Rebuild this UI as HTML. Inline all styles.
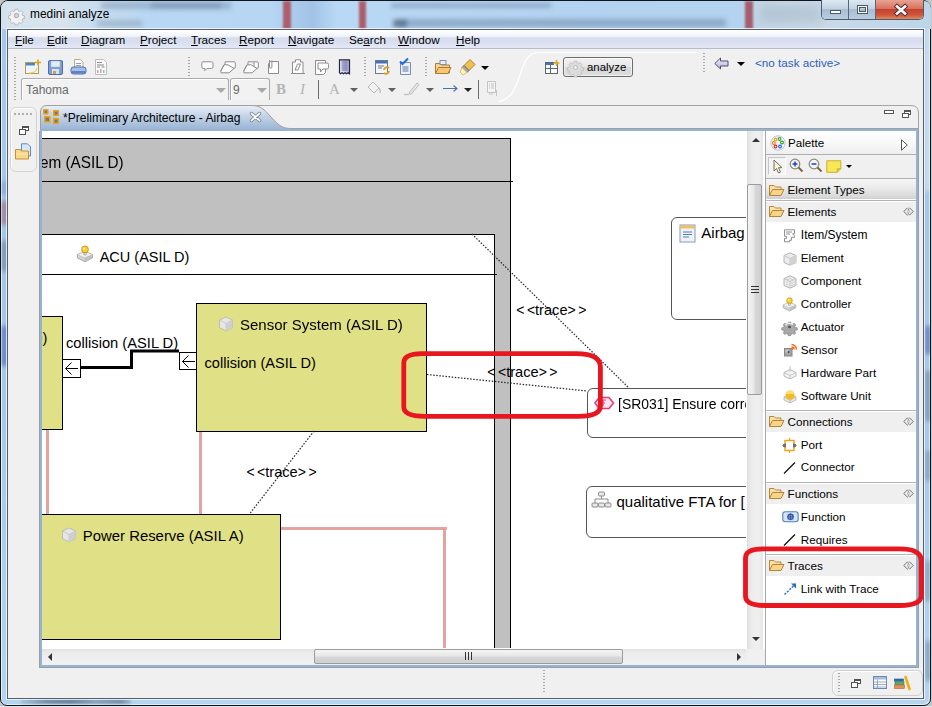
<!DOCTYPE html>
<html><head><meta charset="utf-8">
<style>
*{margin:0;padding:0;box-sizing:border-box}
html,body{width:932px;height:707px;overflow:hidden;background:#c4c6c4;font-family:"Liberation Sans",sans-serif;}
.a{position:absolute}
.t{position:absolute;white-space:nowrap;line-height:1;color:#000}
.ui{font-size:11.7px}
.dg{font-size:15px}
svg{position:absolute;overflow:visible}
u{text-decoration:underline;text-underline-offset:1px}
.dsep{position:absolute;width:2px;background:repeating-linear-gradient(180deg,#a8a8a8 0,#a8a8a8 1px,transparent 1px,transparent 3px)}
.dd{position:absolute;width:0;height:0;border-left:4px solid transparent;border-right:4px solid transparent;border-top:4px solid #000}
.ddg{position:absolute;width:0;height:0;border-left:4px solid transparent;border-right:4px solid transparent;border-top:4px solid #555}
.ph{position:absolute;left:766px;width:150px;height:20px;background:#efefef}
.psep{position:absolute;left:766px;width:150px;height:2px;border-top:1px solid #b4b4b4;border-bottom:1px solid #fff}
.blur{position:absolute;filter:blur(3px)}
</style></head><body>
<!-- ============ window frame ============ -->
<div class="a" style="left:0;top:706px;width:932px;height:1px;background:#dfe6ee"></div>
<div class="a" style="left:0;top:0;width:931px;height:706px;border:1px solid #10161e;border-radius:8px 8px 7px 7px;background:linear-gradient(180deg,#a6c8ea 0,#a4c6e8 300px,#aacbea 500px,#b4d4f0 706px);box-shadow:inset 1px 1px 0 rgba(255,255,255,.75),inset -1px -1px 0 rgba(255,255,255,.6);overflow:hidden">
<div class="blur" style="left:1px;top:180px;width:5px;height:14px;background:#7890c0;opacity:.6;filter:blur(2px)"></div>
<div class="blur" style="left:1px;top:200px;width:5px;height:24px;background:#a05868;opacity:.7;filter:blur(2px)"></div>
<div class="blur" style="left:1px;top:240px;width:5px;height:30px;background:#5a6a80;opacity:.6;filter:blur(2px)"></div>
<div class="blur" style="left:1px;top:325px;width:5px;height:40px;background:#3a58a8;opacity:.7;filter:blur(2px)"></div>
<div class="blur" style="left:924px;top:20px;width:6px;height:170px;background:#dfeaf2;opacity:.7;filter:blur(2px)"></div>
<div class="blur" style="left:924px;top:325px;width:6px;height:28px;background:#3a58a8;opacity:.6;filter:blur(2px)"></div>
<div class="blur" style="left:924px;top:370px;width:6px;height:50px;background:#607890;opacity:.55;filter:blur(2px)"></div>
<div class="blur" style="left:924px;top:450px;width:6px;height:30px;background:#607890;opacity:.45;filter:blur(2px)"></div>
<div class="blur" style="left:924px;top:560px;width:6px;height:40px;background:#607890;opacity:.45;filter:blur(2px)"></div>
<div class="blur" style="left:924px;top:640px;width:6px;height:40px;background:#607890;opacity:.5;filter:blur(2px)"></div>
<div class="blur" style="left:20px;top:698px;width:110px;height:5px;background:linear-gradient(90deg,#a8c4dc 0,#7890a8 25px,#6a84a0 50px,#8aa4bc 75px,#7890a8 100px,#a0bcd8 110px);filter:blur(1px)"></div>
</div>
<!-- title bar glass blur -->
<div class="a" style="left:1px;top:1px;width:930px;height:28px;border-radius:7px 7px 0 0;overflow:hidden;background:linear-gradient(90deg,#cfdfec 0,#d3e1ec 60px,#c8ddf0 100px,#b8d7f4 150px,#b6d6f4 270px,#abcbec 292px,#a2c3e6 312px,#b9d8f5 335px,#b8d7f4 380px,#b3d2f0 600px,#b4d3f0 740px,#c3d6e6 760px,#cad9e6 820px,#bcd5ea 932px)">
  <div class="blur" style="left:100px;top:1px;width:130px;height:7px;background:#7890a8;opacity:.5;filter:blur(2.5px)"></div>
  <div class="blur" style="left:150px;top:2px;width:70px;height:5px;background:#5c7490;opacity:.35;filter:blur(2px)"></div>
  <div class="blur" style="left:96px;top:19px;width:45px;height:7px;background:#8a9fb4;opacity:.55;filter:blur(2.5px)"></div>
  <div class="blur" style="left:0px;top:0px;width:70px;height:28px;background:#e4ecf2;opacity:.35;filter:blur(6px)"></div>
  <div class="blur" style="left:282px;top:0;width:8px;height:28px;background:#ad5e6c;filter:blur(1.3px)"></div>
  <div class="blur" style="left:358px;top:0;width:7px;height:28px;background:#ad5e6c;filter:blur(1.3px)"></div>
  <div class="blur" style="left:390px;top:2px;width:160px;height:5px;background:#6e8aa8;opacity:.5;filter:blur(2px)"></div>
  <div class="blur" style="left:395px;top:18px;width:330px;height:8px;background:#5e7a98;opacity:.45;filter:blur(2.5px)"></div>
  <div class="blur" style="left:392px;top:19px;width:14px;height:7px;background:#30455a;opacity:.5;filter:blur(2px)"></div>
  <div class="blur" style="left:744px;top:0;width:8px;height:28px;background:#a65e6e;filter:blur(1.3px)"></div>
  <div class="blur" style="left:760px;top:4px;width:60px;height:18px;background:#98aabb;opacity:.35;filter:blur(4px)"></div>
</div>
<!-- title icon (gear) -->
<svg style="left:9px;top:8px" width="15" height="15" viewBox="0 0 15 15"><g fill="#f2f2f2" stroke="#a0a0a0" stroke-width=".7"><path d="M6 0.5h3l.4 2 1.5.7 1.8-1.1 2 2-1.1 1.8.7 1.5 2 .4v3l-2 .4-.7 1.5 1.1 1.8-2 2-1.8-1.1-1.5.7-.4 2h-3l-.4-2-1.5-.7-1.8 1.1-2-2 1.1-1.8-.7-1.5-2-.4v-3l2-.4.7-1.5-1.1-1.8 2-2 1.8 1.1 1.5-.7z" transform="scale(.9) translate(.8 .8)"/></g><circle cx="7.5" cy="7.5" r="2.2" fill="#c9d6e0" stroke="#aab"/></svg>
<div class="t" style="left:30px;top:9px;font-size:11.9px;color:#000">medini analyze</div>
<!-- window buttons -->
<div class="a" style="left:821px;top:0;width:103px;height:20px;border:1px solid #4e5d6d;border-top:none;border-radius:0 0 5px 5px;overflow:hidden;background:#fff">
  <div class="a" style="left:0;top:0;width:27px;height:19px;background:linear-gradient(180deg,#dde8f2 0,#c3d3e3 45%,#a9bdd2 50%,#b7cde0 100%);border-right:1px solid #56687a"></div>
  <div class="a" style="left:27px;top:0;width:27px;height:19px;background:linear-gradient(180deg,#dde8f2 0,#c3d3e3 45%,#a9bdd2 50%,#b7cde0 100%);border-right:1px solid #56687a"></div>
  <div class="a" style="left:54px;top:0;width:48px;height:19px;background:linear-gradient(180deg,#e8a393 0,#d8725c 45%,#c7402b 50%,#d0583c 80%,#e08a60 100%)"></div>
  <div class="a" style="left:8px;top:10px;width:11px;height:4px;background:#fff;border:1px solid #4b5866"></div>
  <div class="a" style="left:35px;top:5px;width:11px;height:9px;background:transparent;border:1px solid #4b5866;box-shadow:inset 0 0 0 1px #fff,inset 0 0 0 2px #4b5866"></div>
  <svg style="left:73px;top:5px" width="12" height="10" viewBox="0 0 12 10"><path d="M2 1.5L10 8.5M10 1.5L2 8.5" stroke="#503838" stroke-width="4.6" stroke-linecap="square"/><path d="M2 1.5L10 8.5M10 1.5L2 8.5" stroke="#fff" stroke-width="2.6" stroke-linecap="square"/></svg>
</div>

<!-- ============ client ============ -->
<div class="a" style="left:6px;top:28px;width:919px;height:672px;border:1px solid rgba(255,255,255,.7)"></div>
<div class="a" style="left:7px;top:29px;width:917px;height:670px;border:1px solid #56606c;background:#f0f0f0"></div>

<!-- menubar -->
<div class="a" style="left:8px;top:30px;width:915px;height:19px;background:linear-gradient(180deg,#ffffff 0,#f7f8fc 4px,#eef1f8 7px,#d8deef 7.6px,#d8deef 11px,#e0e5f4 16px,#e3e8f6 18px);border-bottom:1px solid #b5bdcd"></div>
<div class="t ui" style="left:15px;top:34px"><u>F</u>ile</div>
<div class="t ui" style="left:47px;top:34px"><u>E</u>dit</div>
<div class="t ui" style="left:81px;top:34px"><u>D</u>iagram</div>
<div class="t ui" style="left:140px;top:34px"><u>P</u>roject</div>
<div class="t ui" style="left:191px;top:34px"><u>T</u>races</div>
<div class="t ui" style="left:239px;top:34px"><u>R</u>eport</div>
<div class="t ui" style="left:288px;top:34px"><u>N</u>avigate</div>
<div class="t ui" style="left:349px;top:34px">Se<u>a</u>rch</div>
<div class="t ui" style="left:398px;top:34px"><u>W</u>indow</div>
<div class="t ui" style="left:456px;top:34px"><u>H</u>elp</div>

<!-- ============ toolbar ============ -->
<div class="dsep" style="left:14px;top:57px;height:43px"></div>
<!-- new -->
<svg style="left:24px;top:59px" width="17" height="16" viewBox="0 0 17 16"><rect x="1.5" y="3.5" width="13" height="11" fill="#eef6fc" stroke="#b39a55"/><rect x="2" y="4" width="9" height="2.5" fill="#4d86c8"/><path d="M14 .5v6M11 3.5h6" stroke="#d6a520" stroke-width="1.6"/><path d="M13 9 Q12 14 5 14.2" stroke="#f2c84a" fill="none" stroke-width="1.2"/></svg>
<!-- save -->
<svg style="left:47px;top:59px" width="17" height="17" viewBox="0 0 17 17"><rect x="1.5" y="1.5" width="14" height="14" rx="1.5" fill="#7d9fd6" stroke="#4b6cae"/><rect x="4" y="2" width="9" height="6" fill="#e4ecf4" stroke="#9ab0cc" stroke-width=".5"/><rect x="5" y="10" width="7" height="5" fill="#d9e2ee"/><rect x="6" y="12" width="3" height="3" fill="#c8a050"/></svg>
<!-- print -->
<svg style="left:70px;top:59px" width="17" height="17" viewBox="0 0 17 17"><path d="M4.5 .5h6l2.5 2.5v6h-8.5z" fill="#fafafa" stroke="#c4ad78"/><path d="M6 4.5h5M6 6.5h5" stroke="#6a88c0" stroke-width=".8"/><rect x="1" y="8" width="15" height="7" rx="2.5" fill="#a8c0e8" stroke="#4b6cae"/><rect x="1.5" y="12" width="14" height="2.5" rx="1" fill="#6080c4"/></svg>
<!-- report -->
<svg style="left:94px;top:59px" width="14" height="16" viewBox="0 0 14 16"><path d="M1.5 .5h8l3 3v12h-11z" fill="#fafafa" stroke="#bdbdbd"/><path d="M3 3.5h5M3 6h7M3 8h3M7.5 8h3" stroke="#8a8a8a"/><rect x="3" y="11" width="1.5" height="3" fill="#d99aa0"/><rect x="6" y="10" width="1.5" height="4" fill="#9fb2c7"/><rect x="9" y="11" width="1.5" height="3" fill="#a9b8a0"/></svg>

<div class="dsep" style="left:188px;top:57px;height:21px"></div>
<!-- gray note icons -->
<svg style="left:201px;top:61px" width="13" height="11" viewBox="0 0 13 11"><path d="M2 .8h8.5a1.5 1.5 0 0 1 1.5 1.5v3.6a1.5 1.5 0 0 1-1.5 1.5H6L3.8 9.6 4 7.4H2A1.5 1.5 0 0 1 .8 5.9V2.3A1.5 1.5 0 0 1 2 .8z" fill="#fff" stroke="#8c8c8c" stroke-width="1"/></svg>
<svg style="left:220px;top:61px" width="17" height="13" viewBox="0 0 17 13"><path d="M5 .8h9a1.3 1.3 0 0 1 1.3 1.3v4a1.3 1.3 0 0 1-1.3 1.3H5z" fill="#fff" stroke="#8c8c8c"/><path d="M4 3.8h4L14 7.5 9 11.8H1L.8 10z" fill="#fff" stroke="#8c8c8c"/><path d="M.8 10l3.2-6.2" stroke="#8c8c8c"/></svg>
<svg style="left:243px;top:61px" width="17" height="13" viewBox="0 0 17 13"><path d="M5 .8h9a1.3 1.3 0 0 1 1.3 1.3v4a1.3 1.3 0 0 1-1.3 1.3H5z" fill="#fff" stroke="#8c8c8c"/><path d="M4 3.8h4L14 7.5 9 11.8H1L.8 10z" fill="#fff" stroke="#8c8c8c"/><path d="M.8 10l3.2-6.2" stroke="#8c8c8c"/><path d="M10 2.5l1-1v4" stroke="#8c8c8c" fill="none"/></svg>
<svg style="left:267px;top:59px" width="14" height="16" viewBox="0 0 14 16"><path d="M3.5 2.5h8v12h-10V5z" fill="#fff" stroke="#8c8c8c"/><path d="M2.5 1v7a1.2 1.2 0 0 0 2.4 0V1.5" stroke="#8c8c8c" fill="none"/></svg>
<svg style="left:290px;top:59px" width="16" height="16" viewBox="0 0 16 16"><path d="M5.5 .8h5v2.2h2.5v11.5H2.5V3H5.5z" fill="#fff" stroke="#8c8c8c"/><path d="M5 11l2.5-6h3L8 11zM1 14.5h14" stroke="#8c8c8c" fill="none"/></svg>
<svg style="left:314px;top:59px" width="16" height="17" viewBox="0 0 16 17"><path d="M1.5 1.5h10v12l-2 2H1.5z" fill="#fff" stroke="#8c8c8c"/><path d="M4 4h9a1.5 1.5 0 0 1 1.5 1.5v3a1.5 1.5 0 0 1-1.5 1.5h-4l-2.5 3v-3H4z" fill="#fff" stroke="#8c8c8c"/></svg>
<svg style="left:338px;top:59px" width="13" height="16" viewBox="0 0 13 16"><defs><linearGradient id="gnav" x1="0" x2="1"><stop offset="0" stop-color="#f4f4ff"/><stop offset="1" stop-color="#a8a8e0"/></linearGradient></defs><path d="M1.5 .8h10v14l-1.5-1-1.5 1-1.5-1-1.5 1-1.5-1-1.5 1-1-1z" fill="url(#gnav)" stroke="#23233e" stroke-width="1.2"/><path d="M3.5 3h6M3.5 5h6M3.5 7h6M3.5 9h6M3.5 11h6" stroke="#383868" stroke-width=".7"/></svg>

<div class="dsep" style="left:364px;top:57px;height:21px"></div>
<svg style="left:374px;top:59px" width="17" height="17" viewBox="0 0 17 17"><rect x="1.5" y="1.5" width="12" height="13" fill="#f4f6fa" stroke="#6a7a90"/><rect x="2" y="2" width="11" height="2.5" fill="#4a6fb8"/><path d="M4 7h6M4 9h4" stroke="#6a7a90"/><path d="M10 11a3 3 0 0 1 5-2M15 12a3 3 0 0 1-5 2" stroke="#e0a020" stroke-width="2" fill="none"/></svg>
<svg style="left:398px;top:58px" width="15" height="17" viewBox="0 0 15 17"><path d="M2.5 4.5h10v12h-10z" fill="#eef2f8" stroke="#7c8ca8"/><path d="M4.5 9h6M4.5 11h6M4.5 13h6" stroke="#5078b8"/><path d="M2 3.5l2.5 2.5L10 .5" stroke="#1c6ed8" stroke-width="2" fill="none"/></svg>

<div class="dsep" style="left:425px;top:57px;height:21px"></div>
<svg style="left:434px;top:59px" width="18" height="16" viewBox="0 0 18 16"><path d="M1.5 4.5h5l1 1.5h8v8h-14z" fill="#f6d490" stroke="#b07a30"/><rect x="6" y="1.5" width="6" height="4" fill="#e8eef6" stroke="#8090b0"/><path d="M1.5 14.5l3-6h12.5l-3 6z" fill="#f8c870" stroke="#b07a30"/></svg>
<svg style="left:459px;top:58px" width="18" height="18" viewBox="0 0 18 18"><path d="M11 1.5l5 5-6 6-5-5z" fill="#f0c050" stroke="#b08030"/><path d="M5 7.5l5 5-2 2-5-5z" fill="#a8a8a8" stroke="#707070"/><path d="M3 9.5l5 5-4 2.5-3-3z" fill="#fff4c0" stroke="#d8c070"/></svg>
<div class="dd" style="left:481px;top:66px"></div>

<!-- curved perspective bar line -->
<svg style="left:0;top:0" width="932" height="110"><path d="M498.5 101.5 C510 100 515 90 520 75 C525 60 528 53 538 52.5 L697 52.5" stroke="#ffffff" stroke-width="1.2" fill="none"/></svg>
<svg style="left:544px;top:60px" width="16" height="15" viewBox="0 0 16 15"><rect x="1.5" y="2.5" width="12" height="11" fill="#fafafa" stroke="#5c6470"/><rect x="2" y="3" width="8" height="2" fill="#3c74c8"/><path d="M1.5 8.5h12M6.5 5v9" stroke="#5c6470"/><path d="M12.5 0v6M9.5 3h6" stroke="#e0b020" stroke-width="1.6"/></svg>
<div class="a" style="left:563px;top:57px;width:70px;height:20px;border:1px solid #6c6c6c;border-radius:3px;background:linear-gradient(180deg,#f2f2f2 0,#e6e6e6 50%,#d8d8d8 51%,#dcdcdc 100%);box-shadow:inset 0 0 0 1px rgba(255,255,255,.6)"></div>
<svg style="left:568px;top:60px" width="15" height="15" viewBox="0 0 15 15"><path d="M6 0.5h3l.4 2 1.5.7 1.8-1.1 2 2-1.1 1.8.7 1.5 2 .4v3l-2 .4-.7 1.5 1.1 1.8-2 2-1.8-1.1-1.5.7-.4 2h-3l-.4-2-1.5-.7-1.8 1.1-2-2 1.1-1.8-.7-1.5-2-.4v-3l2-.4.7-1.5-1.1-1.8 2-2 1.8 1.1 1.5-.7z" transform="scale(.9) translate(.8 .8)" fill="#dcdcdc" stroke="#b4b4b4" stroke-width=".7"/><circle cx="7.5" cy="7.5" r="2" fill="#eee" stroke="#aaa" stroke-width=".7"/></svg>
<div class="t ui" style="left:587px;top:62px;font-size:11.4px">analyze</div>

<div class="dsep" style="left:703px;top:53px;height:21px"></div>
<svg style="left:714px;top:57px" width="16" height="13" viewBox="0 0 16 13"><path d="M.8 6.5L6.5 1v3h7.5v5H6.5v3z" fill="url(#gba)" stroke="#505060"/><defs><linearGradient id="gba" x1="0" y1="0" x2="0" y2="1"><stop offset="0" stop-color="#f0f0ff"/><stop offset="1" stop-color="#b0b0e0"/></linearGradient></defs></svg>
<div class="dd" style="left:737px;top:62px"></div>
<div class="t ui" style="left:755px;top:57px;color:#2b5fbf">&lt;no task active&gt;</div>

<!-- row 2 -->
<div class="a" style="left:21px;top:78px;width:208px;height:22px;border:1px solid #acacac;border-bottom:none;border-radius:3px 3px 0 0;background:#f2f2f2;box-shadow:inset 1px 1px 0 #fff"></div>
<div class="t" style="left:26px;top:84px;font-size:12px;color:#6a6a6a">Tahoma</div>
<div class="ddg" style="left:216px;top:88px;border-top-color:#a8a8a8;border-left-width:5px;border-right-width:5px;border-top-width:5px"></div>
<div class="a" style="left:230px;top:78px;width:40px;height:22px;border:1px solid #acacac;border-bottom:none;border-radius:3px 3px 0 0;background:#f2f2f2;box-shadow:inset 1px 1px 0 #fff"></div>
<div class="t" style="left:233px;top:84px;font-size:12px;color:#6a6a6a">9</div>
<div class="ddg" style="left:257px;top:88px;border-top-color:#a8a8a8;border-left-width:5px;border-right-width:5px;border-top-width:5px"></div>
<div class="t" style="left:276px;top:82px;font-family:'Liberation Serif',serif;font-weight:bold;font-size:15px;color:#b4b4b4">B</div>
<div class="t" style="left:300px;top:82px;font-family:'Liberation Serif',serif;font-style:italic;font-size:15px;color:#b4b4b4">I</div>
<div class="a" style="left:318px;top:80px;width:1px;height:19px;background:#6c6c6c"></div>
<div class="t" style="left:329px;top:82px;font-family:'Liberation Serif',serif;font-size:15px;color:#b4b4b4">A</div>
<div class="ddg" style="left:350px;top:88px;border-top-color:#606060"></div>
<svg style="left:366px;top:81px" width="16" height="15" viewBox="0 0 16 15"><path d="M2 6l5-5 6 6-5 5z" fill="#f2f2f2" stroke="#b8b8b8"/><path d="M13 7c1 2 2 3 1 5" stroke="#c0c0c0" fill="none" stroke-width="1.5"/></svg>
<div class="ddg" style="left:388px;top:88px;border-top-color:#606060"></div>
<svg style="left:403px;top:81px" width="17" height="15" viewBox="0 0 17 15"><path d="M6 12l8-10 2 1.5-8 10z" fill="#e8e8e8" stroke="#b8b8b8"/><path d="M1 13.5h5" stroke="#c0c0c0" stroke-width="1.4"/></svg>
<div class="ddg" style="left:426px;top:88px;border-top-color:#606060"></div>
<svg style="left:443px;top:85px" width="16" height="7" viewBox="0 0 16 7"><path d="M0 3.5h14M10.5 .5l3.5 3-3.5 3" stroke="#4f6fa8" stroke-width="1.1" fill="none"/></svg>
<div class="dd" style="left:464px;top:88px;border-top-color:#222"></div>
<div class="a" style="left:478px;top:80px;width:1px;height:19px;background:#6c6c6c"></div>
<svg style="left:486px;top:81px" width="12" height="16" viewBox="0 0 12 16"><path d="M1.5 .5h8v11h-8z" fill="#f4f4f4" stroke="#c4c4c4"/><path d="M3 3h1M5 3h3M3 5h1M5 5h3M3 7h1M5 7h3" stroke="#c0c0c0"/><path d="M10.5 9v6M3 13h4" stroke="#c4c4c4"/></svg>


<!-- ============ left trim ============ -->
<div class="a" style="left:10px;top:107px;width:27px;height:65px;border:1px solid #d4d4d4;border-radius:6px;background:#f0f0f0;box-shadow:inset 1px 1px 0 #fff"></div>
<div class="a" style="left:14px;top:113px;width:20px;height:2px;background:repeating-linear-gradient(90deg,#b0b0b0 0,#b0b0b0 2px,transparent 2px,transparent 4px)"></div>
<svg style="left:19px;top:126px" width="10" height="9" viewBox="0 0 10 9"><rect x="3.5" y=".5" width="6" height="4" fill="#fff" stroke="#505050"/><rect x=".5" y="3.5" width="6" height="5" fill="#fff" stroke="#505050"/><path d="M3.5 1.5h6" stroke="#505050"/></svg>
<svg style="left:14px;top:143px" width="18" height="18" viewBox="0 0 18 18"><path d="M7.5 .8h6l3 3V13h-9z" fill="#d8e8fa" stroke="#5a8ad0"/><path d="M1.5 6.5h5l1 1.5h7v8h-13z" fill="#f8d88a" stroke="#c89030"/><path d="M2 11h12" stroke="#f8e8b0"/></svg>

<!-- ============ tab folder ============ -->
<svg style="left:0;top:0" width="932" height="140">
 <defs><linearGradient id="gtab" x1="0" y1="0" x2="0" y2="1"><stop offset="0" stop-color="#eaf0f7"/><stop offset=".35" stop-color="#c9d8e9"/><stop offset="1" stop-color="#95b1d1"/></linearGradient></defs>
 
 <path d="M254 105.5 L911 105.5 Q918.5 105.5 918.5 113 L918.5 131" stroke="#a4a4a4" fill="none"/>
 <path d="M40.5 131 L40.5 112 Q40.5 105.5 47 105.5 L252 105.5 C260 105.5 264 109 271 117 C279 126 283 128.5 291 128.5 L918 128.5 L918 131 Z" fill="url(#gtab)" stroke="#a0a0a0" stroke-width="1"/>
 <rect x="40" y="129" width="878" height="2" fill="#97b3d2"/>
</svg>
<svg style="left:43px;top:109px" width="17" height="17" viewBox="0 0 17 17"><path d="M4 3h4v4M3 5v7h2M12 6v8M9 9h3" stroke="#c8c8c8" fill="none"/><rect x=".8" y=".8" width="4" height="4" fill="#707888" stroke="#f0a010" stroke-width="1.5"/><rect x="10.8" y="1.8" width="4.5" height="4.5" fill="#707888" stroke="#f0a010" stroke-width="1.5"/><rect x="1.8" y="7.8" width="5" height="5" fill="#707888" stroke="#f0a010" stroke-width="1.5"/><rect x="10.8" y="9.8" width="4.5" height="4.5" fill="#707888" stroke="#f0a010" stroke-width="1.5"/></svg>
<div class="t" style="left:63px;top:111.8px;font-size:12.1px">*Preliminary Architecture - Airbag</div>
<svg style="left:250px;top:112px" width="11" height="10" viewBox="0 0 11 10"><path d="M1.5 1.5L9.5 8.5M9.5 1.5L1.5 8.5" stroke="#6f7f90" stroke-width="3.4" stroke-linecap="round"/><path d="M1.5 1.5L9.5 8.5M9.5 1.5L1.5 8.5" stroke="#fff" stroke-width="1.8" stroke-linecap="round"/></svg>
<div class="a" style="left:884px;top:110px;width:10px;height:4px;border:1px solid #555;background:#fff"></div>
<svg style="left:902px;top:110px" width="9" height="8" viewBox="0 0 9 8"><rect x="2.5" y=".5" width="6" height="4" fill="#fff" stroke="#555"/><rect x=".5" y="3.5" width="6" height="4" fill="#fff" stroke="#555"/><path d="M2.5 1.5h6" stroke="#555"/></svg>

<!-- editor frame -->
<div class="a" style="left:39px;top:131px;width:880px;height:537px;border-left:1px solid #9a9ea4;border-right:1px solid #9a9ea4;border-bottom:1px solid #9a9ea4;background:#97b3d2"></div>
<div class="a" style="left:42px;top:131px;width:875px;height:534px;background:#fff"></div>


<!-- ============ diagram canvas (clipped) ============ -->
<div class="a" style="left:0;top:0;width:932px;height:707px;clip-path:inset(131px 186px 59px 42px)">
  <!-- outer container -->
  <div class="a" style="left:20px;top:138px;width:491px;height:600px;border:1px solid #000;background:#c0c0c0"></div>
  <div class="a" style="left:20px;top:181px;width:493px;height:1px;background:#000"></div>
  <div class="t dg" style="left:40.2px;top:153.6px;font-size:17px;transform:scaleX(.9);transform-origin:0 0">em (ASIL D)</div>
  <!-- ACU -->
  <div class="a" style="left:20px;top:234px;width:475px;height:600px;border:1px solid #000;background:#fff"></div>
  <div class="a" style="left:20px;top:274px;width:477px;height:1px;background:#000"></div>
  <svg style="left:76px;top:245px" width="18" height="18" viewBox="0 0 18 18"><path d="M1.5 9.5L9 6.5l7.5 3v3.5L9 16.8 1.5 13z" fill="#d4d4d4" stroke="#a4a4a4" stroke-width=".9"/><path d="M1.5 9.5L9 12.8l7.5-3.3" fill="none" stroke="#b0b0b0" stroke-width=".8"/><path d="M1.9 9.7L9 6.8l7.1 2.9L9 12.6z" fill="#f2f2f2"/><path d="M9 12.8v4" stroke="#b8b8b8" stroke-width=".8"/><path d="M9 12.6l7.3-3v3.3L9 16.6z" fill="#c2c2c2"/><rect x="7.8" y="6" width="2.4" height="4" fill="#d8d8d8" stroke="#9a9a9a" stroke-width=".6"/><circle cx="9" cy="4.4" r="3.4" fill="#f6d030" stroke="#c8920c" stroke-width=".9"/><circle cx="8" cy="3.5" r="1.1" fill="#fff6c0"/></svg>
  <div class="t dg" style="left:99.7px;top:249.6px;font-size:14.5px">ACU (ASIL D)</div>
  <!-- pink wires -->
  <div class="a" style="left:46px;top:429px;width:3px;height:86px;background:#e5a39f"></div>
  <div class="a" style="left:199px;top:431px;width:3px;height:84px;background:#e5a39f"></div>
  <div class="a" style="left:280px;top:527px;width:167px;height:3px;background:#e5a39f"></div>
  <div class="a" style="left:443px;top:527px;width:3px;height:130px;background:#e5a39f"></div>
  <!-- left yellow box -->
  <div class="a" style="left:20px;top:316px;width:43px;height:114px;border:1px solid #000;background:#e0e086"></div>
  <div class="t dg" style="left:32px;top:331px;font-size:14.7px">D)</div>
  <!-- sensor box -->
  <div class="a" style="left:196px;top:303px;width:231px;height:129px;border:1px solid #000;background:#e0e086"></div>
  <svg style="left:218px;top:316px" width="16" height="16" viewBox="0 0 16 16"><path d="M8 1L14.5 4v7.5L8 15 1.5 11.5V4z" fill="#e6e6e6" stroke="#b4b4b4" stroke-width=".8"/><path d="M1.5 4L8 7.5 14.5 4M8 7.5V15" stroke="#c0c0c0" stroke-width=".8" fill="none"/><path d="M8 7.5L14.5 4v7.5L8 15z" fill="#cfcfcf"/></svg>
  <div class="t dg" style="left:240px;top:317.3px;font-size:15.5px;transform:scaleX(.968);transform-origin:0 0">Sensor System (ASIL D)</div>
  <div class="t dg" style="left:204.5px;top:356px;font-size:14.6px">collision (ASIL D)</div>
  <!-- ports + connector -->
  <div class="a" style="left:62px;top:359px;width:19px;height:19px;border:1px solid #000;background:#fff"></div>
  <svg style="left:64px;top:361px" width="15" height="15" viewBox="0 0 15 15"><path d="M14 7.5H1.5M7.5 1.5l-6 6 6 6" stroke="#000" stroke-width="1" fill="none"/></svg>
  <div class="a" style="left:179px;top:352px;width:18px;height:18px;border:1px solid #000;background:#fff"></div>
  <svg style="left:181px;top:353.5px" width="15" height="15" viewBox="0 0 15 15"><path d="M14 7.5H1.5M7.5 1.5l-6 6 6 6" stroke="#000" stroke-width="1" fill="none"/></svg>
  <svg style="left:0;top:0" width="932" height="707"><path d="M80 367.5H131.5V351H179" stroke="#000" stroke-width="3" fill="none" stroke-linejoin="miter"/></svg>
  <div class="t dg" style="left:66px;top:336px;font-size:14.7px">collision (ASIL D)</div>
  <!-- power reserve -->
  <div class="a" style="left:20px;top:514px;width:261px;height:126px;border:1px solid #000;background:#e0e086"></div>
  <svg style="left:61px;top:527px" width="16" height="16" viewBox="0 0 16 16"><path d="M8 1L14.5 4v7.5L8 15 1.5 11.5V4z" fill="#e6e6e6" stroke="#b4b4b4" stroke-width=".8"/><path d="M1.5 4L8 7.5 14.5 4M8 7.5V15" stroke="#c0c0c0" stroke-width=".8" fill="none"/><path d="M8 7.5L14.5 4v7.5L8 15z" fill="#cfcfcf"/></svg>
  <div class="t dg" style="left:82.8px;top:529px;font-size:14.9px">Power Reserve (ASIL A)</div>
  <!-- right side notes -->
  <div class="a" style="left:671px;top:217px;width:120px;height:103px;border:1px solid #555;border-radius:6px;background:#fff"></div>
  <svg style="left:679px;top:224px" width="17" height="19" viewBox="0 0 17 19"><rect x="1" y="1" width="15" height="17" fill="#eef3fa" stroke="#8a9ab8"/><rect x="1.5" y="1.5" width="14" height="3" fill="#f0c060"/><path d="M4 8h9M4 10.5h9M4 13h6" stroke="#5a7ab8" stroke-width="1.2"/></svg>
  <div class="t dg" style="left:701.3px;top:225px">Airbag</div>
  <div class="a" style="left:587px;top:388px;width:200px;height:50px;border:1px solid #555;border-radius:6px;background:#fff"></div>
  <svg style="left:594px;top:396px" width="21" height="14" viewBox="0 0 21 14"><path d="M1 7L5 1.5h10L19.5 7 15 12.5H5z" fill="#fde4ee" stroke="#e0407a" stroke-width="1.6"/><path d="M9 4v6M9 4h3M9 7h2" stroke="#e0407a" stroke-width="1.2"/></svg>
  <div class="t dg" style="left:617.7px;top:396px;font-size:15.5px;transform:scaleX(.9);transform-origin:0 0">[SR031] Ensure corre</div>
  <div class="a" style="left:586px;top:486px;width:200px;height:52px;border:1px solid #555;border-radius:6px;background:#fff"></div>
  <svg style="left:591px;top:491px" width="21" height="18" viewBox="0 0 21 18"><rect x="7.5" y="1" width="6" height="4" rx="1" fill="#e8e8e8" stroke="#8c8c8c"/><path d="M10.5 5v3M4 8h13M4 8v4M17 8v4" stroke="#8c8c8c" fill="none"/><rect x="1" y="12" width="6" height="4" rx="1" fill="#e8e8e8" stroke="#8c8c8c"/><rect x="14" y="12" width="6" height="4" rx="1" fill="#e8e8e8" stroke="#8c8c8c"/><rect x="7.5" y="12" width="6" height="4" rx="1" fill="#e8e8e8" stroke="#8c8c8c"/></svg>
  <div class="t dg" style="left:616.5px;top:493.5px">qualitative FTA for [</div>
  <!-- dotted trace lines -->
  <svg style="left:0;top:0" width="932" height="707"><g stroke="#2a2a2a" stroke-width="1.25" stroke-dasharray="1.5 1.6" fill="none"><path d="M472 234L629 388"/><path d="M427 374.5L587 391"/><path d="M314 431L249.5 514"/></g></svg>
  <div class="t" style="left:516.2px;top:303.04px;font-size:14.6px"><span style="font-size:14px">&lt;</span><span style="font-size:14px;margin-left:2.5px">&lt;</span>trace<span style="font-size:14px">&gt;</span><span style="font-size:14px;margin-left:2.5px">&gt;</span></div>
  <div class="t" style="left:487.3px;top:365.04px;font-size:14.6px"><span style="font-size:14px">&lt;</span><span style="font-size:14px;margin-left:2.5px">&lt;</span>trace<span style="font-size:14px">&gt;</span><span style="font-size:14px;margin-left:2.5px">&gt;</span></div>
  <div class="t" style="left:246.4px;top:465.04px;font-size:14.6px"><span style="font-size:14px">&lt;</span><span style="font-size:14px;margin-left:2.5px">&lt;</span>trace<span style="font-size:14px">&gt;</span><span style="font-size:14px;margin-left:2.5px">&gt;</span></div>
</div>

<!-- vertical scrollbar -->
<div class="a" style="left:747px;top:131px;width:16px;height:518px;background:linear-gradient(90deg,#dedede 0,#e6e6e6 2px,#eeeeee 6px,#efefef 12px,#e6e6e6 16px)"></div>
<div class="a" style="left:752px;top:138px;width:0;height:0;border-left:4px solid transparent;border-right:4px solid transparent;border-bottom:4px solid #333"></div>
<div class="a" style="left:752px;top:637px;width:0;height:0;border-left:4px solid transparent;border-right:4px solid transparent;border-top:4px solid #333"></div>
<div class="a" style="left:747px;top:184px;width:15px;height:211px;border:1px solid #9c9c9c;border-radius:2px;background:linear-gradient(90deg,#f4f4f4 0,#e8e8e8 45%,#d8d8d8 55%,#cfcfcf 100%)"></div>
<svg style="left:751px;top:285px" width="8" height="9" viewBox="0 0 8 9"><path d="M0 1.5h8M0 4.5h8M0 7.5h8" stroke="#333" stroke-width="1"/></svg>
<!-- horizontal scrollbar -->
<div class="a" style="left:42px;top:649px;width:704px;height:16px;background:linear-gradient(180deg,#e3e3e3 0,#ececec 30%,#f2f2f2 100%)"></div>
<div class="a" style="left:48px;top:653px;width:0;height:0;border-top:4px solid transparent;border-bottom:4px solid transparent;border-right:4px solid #333"></div>
<div class="a" style="left:737px;top:653px;width:0;height:0;border-top:4px solid transparent;border-bottom:4px solid transparent;border-left:4px solid #333"></div>
<div class="a" style="left:314px;top:649px;width:309px;height:15px;border:1px solid #9c9c9c;border-radius:2px;background:linear-gradient(180deg,#f4f4f4 0,#e8e8e8 45%,#d8d8d8 55%,#cfcfcf 100%)"></div>
<svg style="left:464px;top:652px" width="9" height="8" viewBox="0 0 9 8"><path d="M1.5 0v8M4.5 0v8M7.5 0v8" stroke="#333" stroke-width="1"/></svg>
<div class="a" style="left:746px;top:649px;width:19px;height:16px;background:#f0f0f0"></div>


<!-- ============ palette ============ -->
<div class="a" style="left:765px;top:131px;width:1px;height:534px;background:#a8a8a8"></div>
<div class="a" style="left:766px;top:131px;width:150px;height:534px;background:#fff"></div>
<!-- header -->
<div class="a" style="left:766px;top:131px;width:150px;height:23px;background:linear-gradient(180deg,#ffffff 0,#f8f8f8 50%,#efefef 100%)"></div>
<div class="a" style="left:766px;top:154px;width:150px;height:1px;background:#b0b0b0"></div>
<svg style="left:770px;top:135px" width="16" height="16" viewBox="0 0 16 16"><circle cx="8" cy="8" r="7.2" fill="#f4f6fa" stroke="#b8c4d4"/><circle cx="5.5" cy="4.5" r="1.4" fill="none" stroke="#f0a020" stroke-width="1.1"/><circle cx="9.5" cy="4" r="1.4" fill="none" stroke="#40a030" stroke-width="1.1"/><circle cx="3.8" cy="8" r="1.4" fill="none" stroke="#f08010" stroke-width="1.1"/><circle cx="12" cy="7.5" r="1.4" fill="none" stroke="#20a020" stroke-width="1.1"/><circle cx="5.5" cy="11.5" r="1.4" fill="none" stroke="#e02020" stroke-width="1.1"/><circle cx="10" cy="11.5" r="1.4" fill="none" stroke="#2060e0" stroke-width="1.1"/></svg>
<div class="t ui" style="left:788px;top:137px;font-size:11.6px">Palette</div>
<svg style="left:901px;top:139px" width="7" height="12" viewBox="0 0 7 12"><path d="M.5 .8L6.3 6 .5 11.2z" fill="#fff" stroke="#555" stroke-width="1"/></svg>
<!-- tools row -->
<div class="a" style="left:766px;top:155px;width:150px;height:23px;background:#f0f0f0"></div>
<div class="a" style="left:766px;top:178px;width:150px;height:1px;background:#b0b0b0"></div>
<div class="a" style="left:768px;top:157px;width:18px;height:18px;border:1px solid #c4c4c4;border-right-color:#fff;border-bottom-color:#fff;background:#f4f4f4"></div>
<svg style="left:773px;top:159px" width="10" height="15" viewBox="0 0 10 15"><path d="M1 1v11l2.5-2.5 2 4.5 2-1-2-4.3H9z" fill="#fffcd0" stroke="#606060" stroke-width=".9"/></svg>
<svg style="left:789px;top:158px" width="15" height="15" viewBox="0 0 15 15"><circle cx="6" cy="6" r="4.8" fill="#f2f4fa" stroke="#8a8a70" stroke-width="1.2"/><path d="M3.5 6h5M6 3.5v5" stroke="#2040c0" stroke-width="1.5"/><path d="M9.5 9.5l4 4" stroke="#7a6040" stroke-width="1.8"/></svg>
<svg style="left:808px;top:158px" width="15" height="15" viewBox="0 0 15 15"><circle cx="6" cy="6" r="4.8" fill="#f2f4fa" stroke="#8a8a70" stroke-width="1.2"/><path d="M3.5 6h5" stroke="#2040c0" stroke-width="1.5"/><path d="M9.5 9.5l4 4" stroke="#7a6040" stroke-width="1.8"/></svg>
<svg style="left:826px;top:160px" width="16" height="13" viewBox="0 0 16 13"><path d="M.8 .8h14v8l-3.5 3.5H.8z" fill="#f8e858" stroke="#c8b030"/><path d="M11.3 12.3V8.8h3.5" fill="#e0c840" stroke="#c8b030"/></svg>
<div class="dd" style="left:846px;top:165px;border-left-width:3px;border-right-width:3px;border-top-width:3px"></div>
<!-- Element Types -->
<div class="a" style="left:766px;top:179px;width:150px;height:20px;background:linear-gradient(180deg,#f6f6f6 0,#ececec 40%,#dadada 85%,#cfcfcf 100%)"></div>
<div class="a" style="left:766px;top:199px;width:150px;height:1px;background:#fff"></div>
<div class="a" style="left:766px;top:200px;width:150px;height:1px;background:#b4b4b4"></div>
<div class="a" style="left:766px;top:201px;width:150px;height:1px;background:#fff"></div>
<div class="t ui" style="left:787.5px;top:183.7px;font-size:11.7px">Element Types</div>
<!-- section headers -->
<div class="ph" style="top:202px"></div>
<div class="psep" style="top:410px"></div><div class="ph" style="top:412px"></div>
<div class="psep" style="top:482px"></div><div class="ph" style="top:484px"></div>
<div class="psep" style="top:554px"></div><div class="ph" style="top:556px"></div>
<div class="t ui" style="left:787.5px;top:205.5px">Elements</div>
<div class="t ui" style="left:787.5px;top:415.6px">Connections</div>
<div class="t ui" style="left:787.5px;top:487.6px">Functions</div>
<div class="t ui" style="left:787.5px;top:559.6px">Traces</div>
<!-- folder icons -->
<svg style="left:768px;top:184px" width="17" height="13" viewBox="0 0 17 13"><path d="M1.5 11.5V1.5h4.5l1.5 1.5h5.5v2.5" fill="#fbe2a4" stroke="#b8843a"/><path d="M1.5 11.5l3-6h11.5l-3 6z" fill="#f8d488" stroke="#b8843a"/></svg>
<svg style="left:768px;top:205px" width="17" height="13" viewBox="0 0 17 13"><path d="M1.5 11.5V1.5h4.5l1.5 1.5h5.5v2.5" fill="#fbe2a4" stroke="#b8843a"/><path d="M1.5 11.5l3-6h11.5l-3 6z" fill="#f8d488" stroke="#b8843a"/></svg>
<svg style="left:768px;top:415px" width="17" height="13" viewBox="0 0 17 13"><path d="M1.5 11.5V1.5h4.5l1.5 1.5h5.5v2.5" fill="#fbe2a4" stroke="#b8843a"/><path d="M1.5 11.5l3-6h11.5l-3 6z" fill="#f8d488" stroke="#b8843a"/></svg>
<svg style="left:768px;top:487px" width="17" height="13" viewBox="0 0 17 13"><path d="M1.5 11.5V1.5h4.5l1.5 1.5h5.5v2.5" fill="#fbe2a4" stroke="#b8843a"/><path d="M1.5 11.5l3-6h11.5l-3 6z" fill="#f8d488" stroke="#b8843a"/></svg>
<svg style="left:768px;top:559px" width="17" height="13" viewBox="0 0 17 13"><path d="M1.5 11.5V1.5h4.5l1.5 1.5h5.5v2.5" fill="#fbe2a4" stroke="#b8843a"/><path d="M1.5 11.5l3-6h11.5l-3 6z" fill="#f8d488" stroke="#b8843a"/></svg>
<!-- collapse icons -->
<svg style="left:903px;top:207px" width="11" height="9" viewBox="0 0 11 9"><path d="M4.5 .8L.8 4.5l3.7 3.7M6.5 .8l3.7 3.7-3.7 3.7" fill="none" stroke="#707070"/><path d="M4.5 .8l2 3.7-2 3.7M6.5 .8l-2 3.7 2 3.7" fill="none" stroke="#909090" stroke-width=".7"/></svg>
<svg style="left:903px;top:417px" width="11" height="9" viewBox="0 0 11 9"><path d="M4.5 .8L.8 4.5l3.7 3.7M6.5 .8l3.7 3.7-3.7 3.7" fill="none" stroke="#707070"/><path d="M4.5 .8l2 3.7-2 3.7M6.5 .8l-2 3.7 2 3.7" fill="none" stroke="#909090" stroke-width=".7"/></svg>
<svg style="left:903px;top:489px" width="11" height="9" viewBox="0 0 11 9"><path d="M4.5 .8L.8 4.5l3.7 3.7M6.5 .8l3.7 3.7-3.7 3.7" fill="none" stroke="#707070"/><path d="M4.5 .8l2 3.7-2 3.7M6.5 .8l-2 3.7 2 3.7" fill="none" stroke="#909090" stroke-width=".7"/></svg>
<svg style="left:903px;top:561px" width="11" height="9" viewBox="0 0 11 9"><path d="M4.5 .8L.8 4.5l3.7 3.7M6.5 .8l3.7 3.7-3.7 3.7" fill="none" stroke="#707070"/><path d="M4.5 .8l2 3.7-2 3.7M6.5 .8l-2 3.7 2 3.7" fill="none" stroke="#909090" stroke-width=".7"/></svg>
<!-- items -->
<div class="t ui" style="left:800.8px;top:228.9px;font-size:12px">Item/System</div>
<div class="t ui" style="left:800.8px;top:251.7px">Element</div>
<div class="t ui" style="left:800.8px;top:274.6px">Component</div>
<div class="t ui" style="left:800.8px;top:297.6px">Controller</div>
<div class="t ui" style="left:800.8px;top:320.6px">Actuator</div>
<div class="t ui" style="left:800.8px;top:343.6px">Sensor</div>
<div class="t ui" style="left:800.8px;top:366.6px">Hardware Part</div>
<div class="t ui" style="left:800.8px;top:389.8px">Software Unit</div>
<div class="t ui" style="left:800.8px;top:438.8px">Port</div>
<div class="t ui" style="left:800.8px;top:461.4px">Connector</div>
<div class="t ui" style="left:800.8px;top:510.6px">Function</div>
<div class="t ui" style="left:800.8px;top:533.6px">Requires</div>
<div class="t ui" style="left:800.8px;top:582.5px">Link with Trace</div>
<!-- item icons -->
<svg style="left:783px;top:229px" width="13" height="13" viewBox="0 0 13 13"><path d="M1.5 .8h10v4h-2l2 2v1.5h-3v3h-2v1.5h-5v-3.5h2v-2h-2z" fill="#fff" stroke="#909090"/><path d="M3 3h6M3 5h4" stroke="#909090"/></svg>
<svg style="left:783px;top:252px" width="14" height="14" viewBox="0 0 14 14"><path d="M7 .8L13 3.5v7L7 13.2 1 10.5v-7z" fill="#ececec" stroke="#b4b4b4"/><path d="M1 3.5L7 6.5 13 3.5M7 6.5v6.7" stroke="#c4c4c4" fill="none"/><path d="M7 6.5L13 3.5v7L7 13.2z" fill="#d2d2d2"/></svg>
<svg style="left:783px;top:275px" width="14" height="14" viewBox="0 0 14 14"><path d="M7 .8L13 3.5v7L7 13.2 1 10.5v-7z" fill="#ececec" stroke="#b4b4b4"/><path d="M1 3.5L7 6.5 13 3.5M7 6.5v6.7" stroke="#c4c4c4" fill="none"/><g fill="#b0b0b0"><circle cx="4" cy="7" r=".6"/><circle cx="4" cy="9.5" r=".6"/><circle cx="9" cy="8" r=".6"/><circle cx="11" cy="7" r=".6"/><circle cx="9" cy="10.5" r=".6"/><circle cx="11" cy="9.5" r=".6"/><circle cx="7" cy="3.5" r=".6"/><circle cx="5" cy="4.5" r=".6"/><circle cx="9" cy="4.5" r=".6"/></g></svg>
<svg style="left:782px;top:297px" width="15" height="15" viewBox="0 0 18 18"><path d="M1.5 9.5L9 6.5l7.5 3v3.5L9 16.8 1.5 13z" fill="#d4d4d4" stroke="#a4a4a4" stroke-width=".9"/><path d="M1.9 9.7L9 6.8l7.1 2.9L9 12.6z" fill="#f2f2f2"/><path d="M9 12.6l7.3-3v3.3L9 16.6z" fill="#c2c2c2"/><rect x="7.8" y="6" width="2.4" height="4" fill="#d8d8d8" stroke="#9a9a9a" stroke-width=".6"/><circle cx="9" cy="4.4" r="3.4" fill="#f6d030" stroke="#c8920c" stroke-width=".9"/><circle cx="8" cy="3.5" r="1.1" fill="#fff6c0"/></svg>
<svg style="left:782px;top:320px" width="16" height="15" viewBox="0 0 16 15"><g transform="translate(7.5 7) scale(.8 .7)"><path d="M-1.5 -7h3l.5 2.2 1.8.8 2-1.2 2.1 2.1-1.2 2 .8 1.8 2.2.5v3l-2.2.5-.8 1.8 1.2 2-2.1 2.1-2-1.2-1.8.8-.5 2.2h-3l-.5-2.2-1.8-.8-2 1.2-2.1-2.1 1.2-2-.8-1.8-2.2-.5v-3l2.2-.5.8-1.8-1.2-2 2.1-2.1 2 1.2 1.8-.8z" fill="#a8a8a8" stroke="#7a7a7a" stroke-width=".8"/><path d="M-5 -2a5 5 0 0 1 9 -1" stroke="#e8e8e8" stroke-width="2" fill="none"/><circle cx="0" cy="0" r="1.8" fill="#505050"/></g></svg>
<svg style="left:784px;top:343px" width="14" height="14" viewBox="0 0 14 14"><rect x=".5" y="5.5" width="7.5" height="7.5" fill="#a4a4a4" stroke="#888"/><rect x="1.5" y="6.5" width="3" height="3" fill="#c8c8c8"/><circle cx="4.5" cy="9" r=".9" fill="#444"/><path d="M7.5 1.5a5 5 0 0 1 5 5M7.5 4a2.5 2.5 0 0 1 2.5 2.5" stroke="#f86818" stroke-width="1.5" fill="none"/><circle cx="8" cy="6" r="1" fill="#f86818"/></svg>
<svg style="left:783px;top:366px" width="14" height="14" viewBox="0 0 14 14"><path d="M1 6.5L7 3.5l6 3v3.5L7 13 1 10z" fill="#f4f4f4" stroke="#b0b0b0" stroke-width=".9"/><path d="M1 6.5L7 9.5l6-3M7 9.5V13M7 0v6" stroke="#b8b8b8" stroke-width=".8" fill="none"/></svg>
<svg style="left:783px;top:389px" width="14" height="14" viewBox="0 0 14 14"><path d="M1 8L7 5l6 3v3L7 14 1 11z" fill="#e8e8e8" stroke="#b0b0b0" stroke-width=".8"/><path d="M1 8L7 11l6-3M7 11v3" stroke="#b0b0b0" stroke-width=".8" fill="none"/><circle cx="7" cy="6" r="4.5" fill="#f8b818"/><path d="M3 5a4 3 0 0 1 8 0" fill="#fde080"/></svg>
<svg style="left:782px;top:438px" width="15" height="15" viewBox="0 0 15 15"><rect x="3" y="2.5" width="9" height="10" fill="#fff" stroke="#f0a010" stroke-width="1.4"/><path d="M7.5 0v2.5M7.5 12.5V15" stroke="#f0a010" stroke-width="1.2"/><path d="M.3 7.5L3.5 5v5zM14.7 7.5L11.5 5v5z" fill="#606060"/><rect x="1" y="6" width="3" height="3" fill="#707070"/><rect x="11" y="6" width="3" height="3" fill="#707070"/></svg>
<svg style="left:783px;top:461px" width="13" height="13" viewBox="0 0 13 13"><path d="M1 12.5L12 1.5" stroke="#111" stroke-width="1.3"/></svg>
<svg style="left:782px;top:510px" width="17" height="13" viewBox="0 0 17 13"><rect x=".8" y="1.8" width="15.4" height="10" rx="2.5" fill="#d4e4f8" stroke="#5080c0" stroke-width="1.1"/><circle cx="8.5" cy="6.8" r="2.6" fill="none" stroke="#3050a0" stroke-width="1.3"/><path d="M5 6.8h7M8.5 3.3v7M6 4.3l5 5M11 4.3l-5 5" stroke="#3050a0" stroke-width=".8"/></svg>
<svg style="left:783px;top:533px" width="13" height="13" viewBox="0 0 13 13"><path d="M1 12.5L12 1.5" stroke="#111" stroke-width="1.3"/></svg>
<svg style="left:783px;top:582px" width="15" height="14" viewBox="0 0 15 14"><path d="M1.5 12.5L12.5 2" stroke="#2a6cc0" stroke-width="1.4" stroke-dasharray="2.2 1.2"/><path d="M8 1.5h5v5z" fill="#2a6cc0"/></svg>

<!-- editor right/bottom blue border over palette -->
<div class="a" style="left:916px;top:129px;width:2px;height:538px;background:#97b3d2"></div>
<div class="a" style="left:40px;top:665px;width:878px;height:2px;background:#97b3d2"></div>
<div class="a" style="left:39px;top:667px;width:880px;height:1px;background:#9a9ea4"></div>


<!-- ============ status bar ============ -->
<div class="dsep" style="left:543px;top:670px;height:24px"></div>
<div class="a" style="left:832px;top:670px;width:91px;height:26px;border:1px solid #d0d0d0;border-radius:6px;background:#f0f0f0;box-shadow:inset 1px 1px 0 #fff"></div>
<div class="dsep" style="left:838px;top:673px;height:21px"></div>
<svg style="left:851px;top:679px" width="10" height="9" viewBox="0 0 10 9"><rect x="3.5" y=".5" width="6" height="4" fill="#fff" stroke="#505050"/><rect x=".5" y="3.5" width="6" height="5" fill="#fff" stroke="#505050"/><path d="M3.5 1.5h6" stroke="#505050"/></svg>
<svg style="left:873px;top:676px" width="14" height="13" viewBox="0 0 14 13"><rect x=".5" y=".5" width="13" height="12" fill="#fff" stroke="#6f88b0"/><rect x="1" y="1" width="12" height="2.5" fill="#a8bcd8"/><path d="M1 6h12M1 8.5h12M1 11h12M4.5 3.5v9" stroke="#8aa0c4" stroke-width=".9"/></svg>
<svg style="left:894px;top:676px" width="17" height="14" viewBox="0 0 17 14"><rect x=".5" y="3" width="9" height="2.2" fill="#2f6ac8" stroke="#2050a0" stroke-width=".6"/><rect x="1" y="5.8" width="9" height="2.8" fill="#5ab060" stroke="#38803a" stroke-width=".6"/><rect x=".5" y="9" width="10" height="3.5" fill="#e09060" stroke="#b86030" stroke-width=".6"/><path d="M11.5 1l4 12" stroke="#f0b010" stroke-width="2.6" stroke-linecap="round"/></svg>

<!-- ============ red annotations ============ -->
<svg style="left:0;top:0" width="932" height="707"><g fill="none" stroke="#e8161e" stroke-width="4.8" stroke-linejoin="round"><path d="M422 353.7 L576 353.7 C592 353.7 600.4 358 600.4 367 L600.4 406 C600.4 413 592 416.3 578 416.3 L425 416.3 C410 416.3 403.8 413 403.8 407 L403.8 363 C403.8 357 410 353.7 422 353.7 Z"/><path d="M763 548.9 L900 548.9 C914 548.9 921.3 553 921.3 561 L921.3 595 C921.3 602 914 605.5 900 605.5 L765 605.5 C752 605.5 745.5 602 745.5 596 L745.5 558 C745.5 552 752 548.9 763 548.9 Z"/></g></svg>


</body></html>
